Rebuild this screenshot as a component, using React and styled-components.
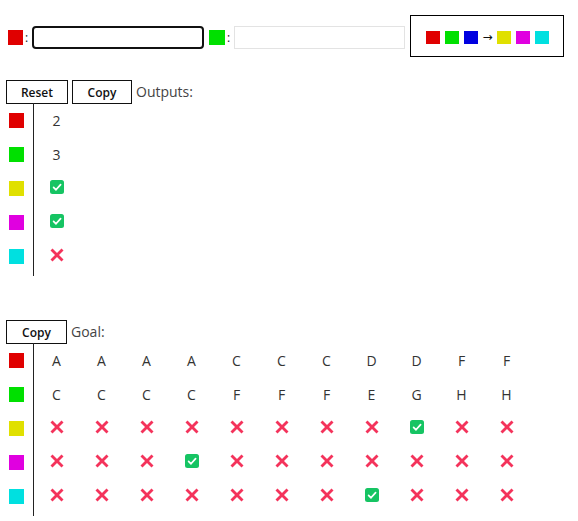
import React from "react";
import styled, { createGlobalStyle } from "styled-components";

const Global = createGlobalStyle`
  html, body { margin: 0; padding: 0; background: #fff; }
  body { font-family: "Open Sans", "Noto Sans", "DejaVu Sans", sans-serif; color: #333; }
`;

const COLORS = {
  r: "#e00000",
  g: "#00e000",
  b: "#0000e0",
  y: "#e0e000",
  m: "#e000e0",
  c: "#00e0e0",
};

const Page = styled.div`
  padding-top: 15px;
`;

const TopBar = styled.div`
  display: flex;
  align-items: center;
  padding-left: 8px;
  height: 42px;
`;

const Field = styled.div`
  display: flex;
  align-items: center;
  margin-top: 3px;
  margin-right: 5px;
`;

const Swatch = styled.span`
  display: inline-block;
  width: ${(p) => p.$w || 15}px;
  height: ${(p) => p.$h || 15}px;
  background: ${(p) => p.$color};
  flex: none;
`;

const Colon = styled.span`
  width: 9px;
  padding-left: 2px;
  box-sizing: border-box;
  font-size: 12px;
  line-height: 1;
  color: #222;
`;

const TextInput = styled.input`
  box-sizing: border-box;
  width: ${(p) => p.$w}px;
  height: 23px;
  margin: 0;
  padding: 0 4px;
  background: #fff;
  border: ${(p) => (p.$focused ? "2px solid #111" : "1px solid #e3e3e3")};
  border-radius: ${(p) => (p.$focused ? "4px" : "0")};
  outline: none;
  font-family: inherit;
  font-size: 13px;
`;

const Legend = styled.div`
  box-sizing: border-box;
  width: 154px;
  height: 42px;
  border: 1.5px solid #000;
  display: flex;
  align-items: center;
  justify-content: center;
  gap: 5px;
  padding-top: 2px;
`;

const Arrow = styled.span`
  font-size: 12px;
  line-height: 1;
  color: #111;
  width: 9px;
  text-align: center;
`;

const Section = styled.div`
  margin-top: ${(p) => p.$mt}px;
`;

const ButtonRow = styled.div`
  display: flex;
  align-items: center;
  gap: 4px;
  padding-left: 6px;
  height: 24px;
`;

const Button = styled.button`
  box-sizing: border-box;
  height: 24px;
  width: ${(p) => p.$w}px;
  padding: 0;
  margin: 0;
  border: 1px solid #111;
  background: #fff;
  font-family: inherit;
  font-size: 12px;
  font-weight: 600;
  color: #111;
`;

const Caption = styled.span`
  font-size: 14px;
  color: #444;
  line-height: 24px;
`;

const Table = styled.div`
  display: flex;
  flex-direction: column;
  margin-top: -1px;
  padding-bottom: 1px;
`;

const Row = styled.div`
  display: flex;
  height: 34px;
`;

const LabelCell = styled.div`
  box-sizing: border-box;
  width: 34px;
  padding-left: 9px;
  border-right: 1px solid #222;
  display: flex;
  align-items: center;
  flex: none;
`;

const ValueCell = styled.div`
  width: 45px;
  flex: none;
  display: flex;
  align-items: center;
  justify-content: center;
  font-size: 14px;
  color: #333;
`;

const IconWrap = styled.span`
  display: inline-flex;
  margin-bottom: 3px;
`;

const TableEnd = styled.div`
  box-sizing: border-box;
  width: 34px;
  height: 3px;
  border-right: 1px solid #222;
`;

function Check() {
  return (
    <IconWrap>
      <svg width="14" height="14" viewBox="0 0 14 14">
        <rect x="0" y="0" width="14" height="14" rx="2.5" fill="#16c463" />
        <polyline
          points="3.6,7.4 6,9.8 10.6,4.6"
          fill="none"
          stroke="#fff"
          strokeWidth="1.7"
          strokeLinecap="round"
          strokeLinejoin="round"
        />
      </svg>
    </IconWrap>
  );
}

function Cross() {
  return (
    <IconWrap>
      <svg width="14" height="14" viewBox="0 0 14 14">
        <g stroke="#f4335b" strokeWidth="2.8" strokeLinecap="butt">
          <line x1="1.5" y1="1.5" x2="12.5" y2="12.5" />
          <line x1="12.5" y1="1.5" x2="1.5" y2="12.5" />
        </g>
      </svg>
    </IconWrap>
  );
}

function Value({ v }) {
  if (v === true) return <Check />;
  if (v === false) return <Cross />;
  return <span>{v}</span>;
}

function DataTable({ rows }) {
  return (
    <Table>
      {rows.map((r) => (
        <Row key={r.key}>
          <LabelCell>
            <Swatch $color={COLORS[r.key]} />
          </LabelCell>
          {r.values.map((v, i) => (
            <ValueCell key={i}>
              <Value v={v} />
            </ValueCell>
          ))}
        </Row>
      ))}
      <TableEnd />
    </Table>
  );
}

const X = false;
const V = true;

const outputs = [
  { key: "r", values: ["2"] },
  { key: "g", values: ["3"] },
  { key: "y", values: [V] },
  { key: "m", values: [V] },
  { key: "c", values: [X] },
];

const goal = [
  { key: "r", values: "AAAACCCDDFF".split("") },
  { key: "g", values: "CCCCFFFEGHH".split("") },
  { key: "y", values: [X, X, X, X, X, X, X, X, V, X, X] },
  { key: "m", values: [X, X, X, V, X, X, X, X, X, X, X] },
  { key: "c", values: [X, X, X, X, X, X, X, V, X, X, X] },
];

export default function App() {
  return (
    <Page>
      <Global />
      <TopBar>
        <Field>
          <Swatch $color={COLORS.r} />
          <Colon>:</Colon>
          <TextInput $w={172} $focused />
        </Field>
        <Field>
          <Swatch $color={COLORS.g} $w={16} />
          <Colon>:</Colon>
          <TextInput $w={171} />
        </Field>
        <Legend>
          <Swatch $color={COLORS.r} $w={14} $h={13} />
          <Swatch $color={COLORS.g} $w={14} $h={13} />
          <Swatch $color={COLORS.b} $w={14} $h={13} />
          <Arrow>→</Arrow>
          <Swatch $color={COLORS.y} $w={14} $h={13} />
          <Swatch $color={COLORS.m} $w={14} $h={13} />
          <Swatch $color={COLORS.c} $w={14} $h={13} />
        </Legend>
      </TopBar>

      <Section $mt={23}>
        <ButtonRow>
          <Button $w={62}>Reset</Button>
          <Button $w={60}>Copy</Button>
          <Caption>Outputs:</Caption>
        </ButtonRow>
        <DataTable rows={outputs} />
      </Section>

      <Section $mt={43}>
        <ButtonRow>
          <Button $w={61}>Copy</Button>
          <Caption>Goal:</Caption>
        </ButtonRow>
        <DataTable rows={goal} />
      </Section>
    </Page>
  );
}
